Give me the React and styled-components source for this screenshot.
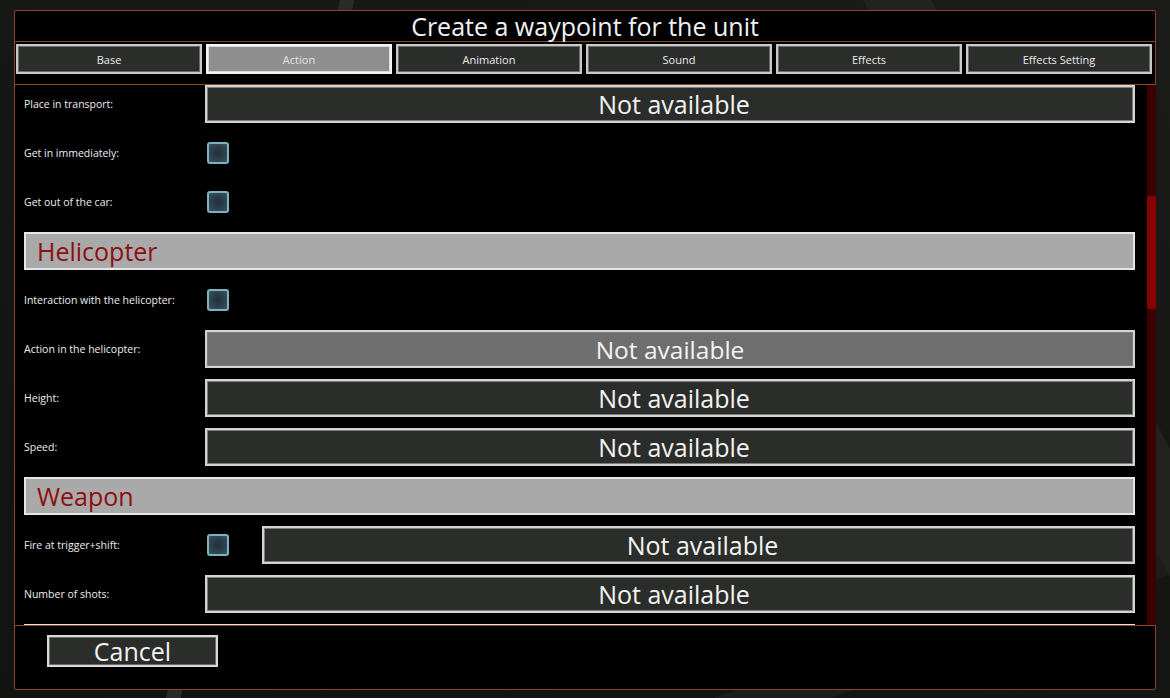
import React from "react";
import styled, { createGlobalStyle } from "styled-components";

const Global = createGlobalStyle`
  html, body {
    margin: 0;
    padding: 0;
  }
  body {
    width: 1170px;
    height: 698px;
    overflow: hidden;
    font-family: "Open Sans", Lato, sans-serif;
    background-color: #161614;
    background-image:
      linear-gradient(104deg, transparent 0 330px, #2a2a28 330px 344px, transparent 344px),
      linear-gradient(62deg, transparent 0 1090px, #222220 1090px 1150px, transparent 1150px),
      linear-gradient(160deg, transparent 0 900px, #1d1d1b 900px 940px, transparent 940px),
      linear-gradient(200deg, #1a1a18, #121210);
  }
`;

const Window = styled.div`
  box-sizing: border-box;
  margin: 10px 0 0 14px;
  width: 1142px;
  height: 680px;
  border: 1px solid #8e4526;
  border-radius: 2px;
  background: #000;
  display: flex;
  flex-direction: column;
`;

const TitleBar = styled.div`
  height: 31px;
  border-bottom: 1px solid #8e4526;
  display: flex;
  align-items: center;
  justify-content: center;
  color: #f2f2f2;
  font-size: 25px;
  line-height: 1;
  padding-top: 1px;
  box-sizing: border-box;
`;

const Tabs = styled.div`
  display: grid;
  grid-template-columns: repeat(6, 186px);
  gap: 4px;
  padding: 2px 0 0 1px;
  height: 43px;
  box-sizing: border-box;
  border-bottom: 1px solid #8e4526;
`;

const Tab = styled.div`
  box-sizing: border-box;
  height: 30px;
  border: 2px solid ${(p) => (p.$active ? "#f4f4f4" : "#c9c9c9")};
  box-shadow: inset 0 0 0 1px ${(p) => (p.$active ? "#d8d8d8" : "#6a6c6a")};
  background: ${(p) => (p.$active ? "#8e8e8e" : "#2b2d2b")};
  color: ${(p) => (p.$active ? "#e4e4e4" : "#ececec")};
  font-size: 11px;
  padding-top: 1px;
  display: flex;
  align-items: center;
  justify-content: center;
`;

const Panel = styled.div`
  display: flex;
  height: 541px;
  border-bottom: 1px solid #8e4526;
  box-sizing: border-box;
`;

const List = styled.div`
  flex: 1;
  overflow: hidden;
  padding: 0 12px 0 9px;
  display: flex;
  flex-direction: column;
  gap: 11px;
`;

const Track = styled.div`
  width: 9px;
  margin-right: -1px;
  background: #3a0000;
  display: flex;
  flex-direction: column;
`;

const Thumb = styled.div`
  margin-top: 111px;
  height: 113px;
  background: #880000;
`;

const Row = styled.div`
  flex: 0 0 38px;
  display: flex;
  align-items: center;
`;

const Label = styled.div`
  width: 181px;
  flex: 0 0 181px;
  color: #eeeeee;
  font-size: 10.5px;
`;

const Field = styled.div`
  flex: 1;
  box-sizing: border-box;
  height: 38px;
  border: 2px solid #d4d4d4;
  box-shadow: inset 0 0 0 1px #7c7e7c;
  background: ${(p) => (p.$disabled ? "#6e6e6e" : "#2b2d2a")};
  color: #f4f4f4;
  font-size: ${(p) => (p.$disabled ? 24.5 : 25)}px;
  font-weight: ${(p) => (p.$disabled ? 400 : 500)};
  display: flex;
  align-items: center;
  justify-content: center;
  padding-left: ${(p) => (p.$disabled ? 0 : 8)}px;
  margin-left: ${(p) => p.$offset || 0}px;
`;

const Check = styled.div`
  box-sizing: border-box;
  width: 22px;
  height: 22px;
  margin-left: 2px;
  flex: 0 0 22px;
  border: 2px solid #7db0c0;
  border-radius: 3px;
  background: radial-gradient(circle, #233039 0%, #2e434f 60%, #3b5562 100%);
`;

const Header = styled.div`
  flex: 0 0 38px;
  box-sizing: border-box;
  border: 2px solid #e6e6e6;
  background: #a9a9a9;
  color: #8c0f0f;
  font-size: 25px;
  display: flex;
  align-items: center;
  padding-left: 11px;
`;

const Footer = styled.div`
  flex: 1;
  padding: 9px 0 0 32px;
`;

const CancelButton = styled.div`
  box-sizing: border-box;
  width: 171px;
  height: 32px;
  border: 2px solid #d8d8d8;
  box-shadow: inset 0 0 0 1px #6a6c6a;
  background: #2b2d2a;
  color: #f2f2f2;
  font-size: 25px;
  display: flex;
  align-items: center;
  justify-content: center;
`;

const tabs = ["Base", "Action", "Animation", "Sound", "Effects", "Effects Setting"];

const NA = "Not available";

export default function App() {
  return (
    <>
      <Global />
      <Window>
        <TitleBar>Create a waypoint for the unit</TitleBar>
        <Tabs>
          {tabs.map((t) => (
            <Tab key={t} $active={t === "Action"}>
              {t}
            </Tab>
          ))}
        </Tabs>
        <Panel>
          <List>
            <Row>
              <Label>Place in transport:</Label>
              <Field>{NA}</Field>
            </Row>
            <Row>
              <Label>Get in immediately:</Label>
              <Check />
            </Row>
            <Row>
              <Label>Get out of the car:</Label>
              <Check />
            </Row>
            <Header>Helicopter</Header>
            <Row>
              <Label>Interaction with the helicopter:</Label>
              <Check />
            </Row>
            <Row>
              <Label>Action in the helicopter:</Label>
              <Field $disabled>{NA}</Field>
            </Row>
            <Row>
              <Label>Height:</Label>
              <Field>{NA}</Field>
            </Row>
            <Row>
              <Label>Speed:</Label>
              <Field>{NA}</Field>
            </Row>
            <Header>Weapon</Header>
            <Row>
              <Label>Fire at trigger+shift:</Label>
              <Check />
              <Field $offset={33}>{NA}</Field>
            </Row>
            <Row>
              <Label>Number of shots:</Label>
              <Field>{NA}</Field>
            </Row>
            <Header />
          </List>
          <Track>
            <Thumb />
          </Track>
        </Panel>
        <Footer>
          <CancelButton>Cancel</CancelButton>
        </Footer>
      </Window>
    </>
  );
}
